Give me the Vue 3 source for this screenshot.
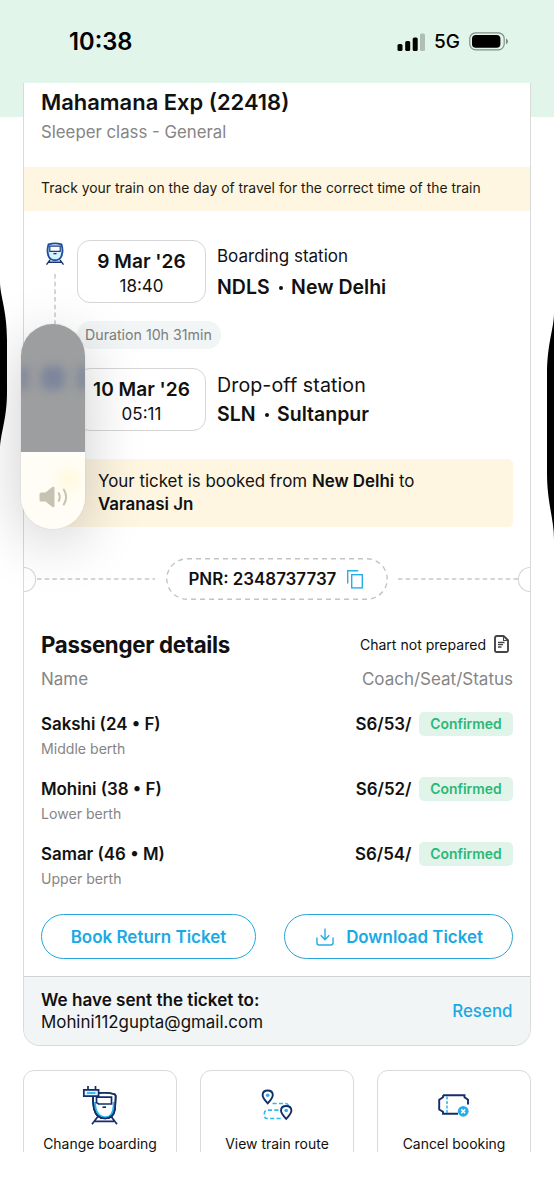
<script setup>
const passengers = [
  { name: 'Sakshi (24 • F)', berth: 'Middle berth', seat: 'S6/53/' },
  { name: 'Mohini (38 • F)', berth: 'Lower berth', seat: 'S6/52/' },
  { name: 'Samar (46 • M)', berth: 'Upper berth', seat: 'S6/54/' },
]
</script>

<template>
  <div class="screen">
    <header class="status">
      <span class="time">10:38</span>
      <div class="signals">
        <svg class="bars" width="29" height="18" viewBox="0 0 29 18">
          <rect x="0.5" y="11" width="5" height="7" rx="1.6" />
          <rect x="8.2" y="8" width="5" height="10" rx="1.6" />
          <rect x="15.7" y="4.5" width="5" height="13.5" rx="1.6" />
          <rect x="23" y="0.5" width="5" height="17.5" rx="1.6" opacity="0.22" />
        </svg>
        <span class="net">5G</span>
        <svg class="battery" width="39" height="19" viewBox="0 0 39 19">
          <rect x="0.8" y="0.8" width="34.4" height="17" rx="5.8" fill="none" stroke="#000" stroke-opacity="0.42" stroke-width="1.2" />
          <rect x="3" y="3" width="28.4" height="12.8" rx="3.8" />
          <path d="M37 6.4v5.8c1.2-.5 1.9-1.6 1.9-2.9S38.200 6.900 37 6.400z" opacity="0.45" />
        </svg>
      </div>
    </header>

    <main class="card">
      <section class="head">
        <h1>Mahamana Exp (22418)</h1>
        <p>Sleeper class - General</p>
      </section>

      <div class="notice"><span>Track your train on the day of travel for the correct time of the train</span></div>

      <section class="journey">
        <div class="rail">
          <svg width="20" height="24" viewBox="0 0 20 24" fill="none">
            <path d="M3.500 2.500Q10 .200 16.500 2.500Q18.600 9 16.300 14.500Q14.800 18.200 10 18.200T3.700 14.500Q1.400 9 3.500 2.500z" fill="#d5f1fc" stroke="#1d51a0" stroke-width="1.900" />
            <path d="M4.800 4.200h10.400v5.200H4.800z" fill="#fff" stroke="#233a7e" stroke-width="1.200" />
            <path d="M8.500 11.700h3" stroke="#102a6b" stroke-width="1.200" />
            <path d="M5 18L1.500 22.600M15 18l3.500 4.600M3.600 20.300h12.800" stroke="#17366e" stroke-width="1.400" />
          </svg>
          <svg class="track-line" width="2" height="100"><path d="M1 0V100" /></svg>
        </div>
        <div class="stops">
          <div class="stop">
            <div class="when"><b>9 Mar '26</b><span>18:40</span></div>
            <div class="where"><span class="kind boarding">Boarding station</span><b class="ndls">NDLS<em></em>New Delhi</b></div>
          </div>
          <div class="duration"><span>Duration 10h 31min</span></div>
          <div class="stop">
            <div class="when"><b>10 Mar '26</b><span>05:11</span></div>
            <div class="where"><span class="kind drop">Drop-off station</span><b class="sln">SLN<em></em>Sultanpur</b></div>
          </div>
        </div>
      </section>

      <div class="booked">
        <p>Your ticket is booked from <b>New Delhi</b> to<br /><b>Varanasi Jn</b></p>
      </div>

      <section class="pnr-row">
        <i class="notch left"></i>
        <svg class="dash" height="2" width="118"><path d="M0 1H118" /></svg>
        <div class="pnr">
          <svg class="outline" width="222" height="42"><rect x="0.800" y="0.800" width="220.400" height="40.400" rx="20.200" /></svg>
          <b>PNR: 2348737737</b>
          <svg width="18" height="20" viewBox="0 0 18 20" fill="none" stroke="#27aee4" stroke-width="1.400">
            <path d="M1.700 14.500V1.700h10.500" />
            <rect x="5.700" y="5.700" width="10.600" height="13.200" />
          </svg>
        </div>
        <svg class="dash" height="2" width="120"><path d="M0 1H120" /></svg>
        <i class="notch right"></i>
      </section>

      <section class="passengers">
        <div class="line title">
          <h2>Passenger details</h2>
          <div class="chart">
            <span>Chart not prepared</span>
            <svg width="15" height="18" viewBox="0 0 15 18" fill="none" stroke="#454545" stroke-linejoin="round">
              <path d="M3 1H9.600L14 5.300V15.500Q14 17 12.500 17H2.500Q1 17 1 15.500V3Q1 1 3 1z" stroke-width="1.900" />
              <path d="M9.500 1v4.500H14" stroke-width="1.100" />
              <path d="M4 7.500h6.500M4 9.700h5M4 12h3.500" stroke-width="1.300" />
            </svg>
          </div>
        </div>
        <div class="line labels"><span>Name</span><span>Coach/Seat/Status</span></div>
        <div v-for="p in passengers" :key="p.name" class="person">
          <div class="line who">
            <b>{{ p.name }}</b>
            <div class="seat"><b>{{ p.seat }}</b><span class="badge">Confirmed</span></div>
          </div>
          <p>{{ p.berth }}</p>
        </div>
      </section>

      <div class="actions">
        <button class="return"><span>Book Return Ticket</span></button>
        <button class="download">
          <svg width="18" height="18" viewBox="0 0 19 19" fill="none" stroke="#27aee4" stroke-width="1.500">
            <path d="M9.500 .500v11.500M5 7.700l4.500 4.600L14 7.700M1 10v5.300Q1 17.900 3.200 17.900h12.600q2.200 0 2.200-2.600V10" />
          </svg>
          <span>Download Ticket</span>
        </button>
      </div>

      <footer class="sent">
        <div><b>We have sent the ticket to:</b><span>Mohini112gupta@gmail.com</span></div>
        <a>Resend</a>
      </footer>
    </main>

    <nav class="tiles">
      <div class="tile">
        <div class="icon">
          <svg width="36" height="40" viewBox="0 0 36 40" fill="none" stroke="#142c69" stroke-width="1.700">
            <path d="M12 9Q22 6.500 32 9Q34 9.700 33.700 12L33 24Q31.500 33.500 23 33.500T12 24Q10.700 18 11 11z" fill="#fff" />
            <path d="M13 17Q13 31 22.500 32.200T31.800 17" stroke="#27b4ee" stroke-width="2" />
            <path d="M12 9Q22 6.500 32 9Q34 9.700 33.700 12L33 24Q31.500 33.500 23 33.500T12 24Q10.700 18 11 11z" />
            <path d="M14.500 12.200h15V19h-13l-2-1.500z" fill="#fff" />
            <path d="M20.500 22.200H24" />
            <path d="M15.500 32L10 39.300M29.500 32l5.500 7.300M13 36.300h19" />
            <path d="M6 1v5M13.500 1v5" />
            <path d="M1.800 4.900h14.800v6.300H1.800z" fill="#d7f3fd" />
            <path d="M5 8h8.500" stroke="#27b4ee" />
          </svg>
        </div>
        <span>Change boarding</span>
      </div>
      <div class="tile">
        <div class="icon">
          <svg width="32" height="32" viewBox="0 0 32 32" fill="none" stroke="#142c69" stroke-width="1.900">
            <path d="M11.500 14.500H23M24.200 14.500Q28 14.500 27 18.200M17.500 21.200H6Q3.300 21.200 3.300 25.500T6 29.500H21" stroke="#31b9ee" stroke-width="1.700" stroke-dasharray="4.200 2.200" />
            <path d="M6.700 14.300Q1.600 9 1.600 6Q1.800 1.500 6.700 1.500T11.800 6Q11.800 9 6.700 14.300z" fill="#fff" />
            <path d="M25.200 29.800Q20 24.500 20 21.500Q20.200 17 25.200 17T30.400 21.500Q30.400 24.500 25.200 29.800z" fill="#fff" />
            <circle cx="6.700" cy="6.200" r="1.800" fill="#31aee4" stroke="none" />
            <circle cx="25.200" cy="21.500" r="1.800" fill="#31aee4" stroke="none" />
          </svg>
        </div>
        <span>View train route</span>
      </div>
      <div class="tile">
        <div class="icon">
          <svg width="32" height="22" viewBox="0 0 32 22" fill="none" overflow="visible">
            <path d="M5 1.200H26.500V3.200L30 5.700V10.500M20 19.700H5V17.800L1.200 15.500V5.700L5 3.200V1.200" stroke="#142c69" stroke-width="1.900" />
            <path d="M9 2.500V19" stroke="#31b4ea" stroke-width="1.500" stroke-dasharray="3 1.500" />
            <circle cx="25.200" cy="17.300" r="5.400" fill="#27aee8" />
            <path d="M23.300 15.400l3.800 3.800M27.100 15.400l-3.800 3.800" stroke="#fff" stroke-width="1.500" />
          </svg>
        </div>
        <span>Cancel booking</span>
      </div>
    </nav>

    <div class="volume">
      <div class="track">
        <div class="empty"><i></i><i></i><i></i></div>
        <div class="level">
          <svg width="30" height="22" viewBox="0 0 30 22" fill="none" stroke="#c6c3b2" stroke-width="2" stroke-linecap="round">
            <path d="M2 6.500H6.500L13 1.200Q15.500 0 15.500 2V20Q15.500 22 13 20.800L6.500 15.500H2Q.5 15.500.5 14V8Q.5 6.500 2 6.500z" fill="#c6c3b2" stroke="none" />
            <path d="M19.800 7.200Q21.700 11 19.800 14.800M24.800 3.500Q29.500 11 24.800 18.500" />
          </svg>
        </div>
      </div>
    </div>

    <!-- side bulges of the screen edge while the volume key is held -->
    <svg class="edge edge-left" width="8" height="168" viewBox="0 0 8 168"><path d="M0 0C0 14 7 28 7 58V110C7 138 0 152 0 168z" /></svg>
    <svg class="edge edge-right" width="8" height="226" viewBox="0 0 8 226"><path d="M8 0C8 16 1 30 1 62V160C1 190 8 206 8 226z" /></svg>
  </div>
</template>

<style>
html, body { background: #fff; }
</style>

<style scoped>
* { box-sizing: border-box; margin: 0; padding: 0; }
.screen {
  position: relative; width: 554px; height: 1200px; overflow: hidden;
  background: linear-gradient(#e1f5ea 0 117px, #fff 117px);
  font-family: Inter, "Liberation Sans", sans-serif; color: #111; white-space: nowrap;
}
svg { display: block; flex: none; }
b, h1, h2 { font-weight: 600; }

.status { height: 83px; display: flex; justify-content: space-between; align-items: flex-start; padding: 28px 46px 0 69px; color: #000; }
.time { font-size: 23.700px; line-height: 28px; font-weight: 600; }
.signals { display: flex; align-items: center; height: 27px; }
.net { font-size: 19px; font-weight: 450; margin: 0 9px 0 8px; }

.card { margin: 0 23px; height: 963px; border: 1px solid #d9dadb; border-width: 0 1px 1px; border-radius: 0 0 17px 17px; background: #fff; overflow: hidden; }
.head { height: 84px; padding: 6px 17px 0; }
.head h1 { font-size: 21.950px; line-height: 26px; }
.head p { font-size: 16.800px; line-height: 22px; margin-top: 6px; color: #858585; }
.notice { height: 44px; padding: 0 17px; line-height: 43px; background: #fef6e0; font-size: 13.920px; color: #1c1a12; }

.journey { display: flex; padding-top: 29px; height: 248px; }
.rail { width: 53px; padding: 2px 0 0 9px; display: flex; flex-direction: column; align-items: center; }
.track-line { margin-top: 8px; }
.track-line path { stroke: #c4c4c4; stroke-width: 1.400; stroke-dasharray: 4.500 3.200; }
.stop { display: flex; }
.when { width: 129px; height: 63px; border: 1px solid #d6d6d6; border-radius: 13px; display: flex; flex-direction: column; align-items: center; padding-top: 8px; }
.when b { font-size: 19.100px; line-height: 25px; }
.when span { font-size: 17px; line-height: 24px; }
.where { margin-left: 11px; display: flex; flex-direction: column; }
.kind { line-height: 26px; margin-top: 3px; }
.boarding { font-size: 17px; }
.drop { font-size: 19.600px; letter-spacing: 0.100px; margin-top: 4px; }
.where b { font-size: 19.500px; line-height: 26px; display: flex; align-items: center; }
.ndls { margin-top: 5px; }
.sln { margin-top: 3px; }
.where em { width: 4px; height: 4px; border-radius: 2px; background: #111; margin: 1px 8.500px 0 9px; }
.duration { margin: 18px 0 19px; width: 144px; height: 28px; border-radius: 14px; background: #f1f5f5; color: #7b7e7e; font-size: 14.200px; line-height: 28px; padding-left: 8px; }

.booked { margin: 0 17px; height: 68px; border-radius: 5px; background: #fef6e0; padding: 11px 0 0 57px; font-size: 16.900px; line-height: 23px; }

.pnr-row { height: 42px; margin-top: 31px; display: flex; align-items: center; }
.notch { width: 12px; height: 25px; border: 1px solid #d4d4d4; }
.notch.left { border-left: 0; border-radius: 0 13px 13px 0; margin-right: 1px; }
.notch.right { border-right: 0; border-radius: 13px 0 0 13px; margin-left: auto; }
.dash path { stroke: #c8c8c8; stroke-width: 1.500; stroke-dasharray: 4.500 3.200; }
.pnr { position: relative; width: 222px; height: 42px; margin: 0 11px; display: flex; align-items: center; padding-left: 22.500px; gap: 9.500px; font-size: 16.900px; }
.outline { position: absolute; inset: 0; }
.outline rect { fill: none; stroke: #c4c4c4; stroke-width: 1.400; stroke-dasharray: 5 4; }

.passengers { padding: 30px 17px 0; height: 314px; }
.line { display: flex; justify-content: space-between; align-items: center; }
.title { height: 28px; }
h2 { font-size: 22.300px; font-weight: 700; letter-spacing: -0.300px; }
.chart { display: flex; align-items: center; gap: 8px; font-size: 14.050px; padding: 0 4px 0 0; }
.labels { height: 24px; margin-top: 9px; font-size: 17px; color: #858585; }
.person { height: 65px; }
.labels + .person { margin-top: 21px; }
.who { height: 24px; font-size: 16.900px; }
.seat { display: flex; align-items: center; gap: 7.500px; }
.badge { width: 94px; height: 24px; border-radius: 5px; background: #e1f4ea; color: #2ab877; font-size: 13.900px; font-weight: 600; line-height: 24px; text-align: center; }
.person p { font-size: 14.100px; line-height: 20px; margin-top: 3px; color: #858585; }

.actions { display: flex; justify-content: space-between; padding: 0 17px; }
button { height: 45px; border: 1px solid #27a6dc; border-radius: 23px; background: #fff; color: #1ba9e4; font-family: inherit; font-size: 17px; font-weight: 600; display: flex; align-items: center; justify-content: center; }
.return { width: 215px; }
.download { width: 229px; gap: 12px; padding-left: 2px; font-size: 16.900px; }

.sent { margin-top: 17px; height: 70px; border-top: 1px solid #cdd3d6; background: #f1f5f6; display: flex; justify-content: space-between; align-items: center; padding: 0 17.500px 2px 17px; font-size: 16.900px; line-height: 23px; }
.sent b, .sent span { display: block; }
.sent b { font-size: 17.100px; }
.sent a { color: #1ba9e4; font-weight: 500; padding-top: 2px; }

.tiles { margin: 24px 23px 0; height: 82px; overflow: hidden; display: flex; justify-content: space-between; }
.tile { width: 154px; height: 110px; border: 1px solid #d9d9d9; border-radius: 11px; display: flex; flex-direction: column; align-items: center; font-size: 13.950px; }
.icon { height: 40px; margin-top: 14px; display: flex; align-items: center; }
.tile span { margin-top: 10px; line-height: 18px; }

.edge { position: absolute; }
.edge-left { left: 0; top: 282px; }
.edge-right { right: 0; top: 313px; }
.volume { position: absolute; left: 21px; top: 324px; width: 64px; height: 205px; border-radius: 32px; box-shadow: 0 14px 60px rgba(0, 0, 0, 0.2), 0 0 2px rgba(0, 0, 0, 0.1); }
.track { height: 100%; border-radius: 32px; overflow: hidden; }
.empty { height: 128px; background: #9d9e9f; display: flex; align-items: flex-start; justify-content: space-between; padding-top: 42px; }
.empty i { width: 9px; height: 24px; border-radius: 8px; background: #74809b; opacity: 0.8; filter: blur(5px); margin: 0 -2px; }
.empty i:nth-child(2) { width: 24px; }
.level { height: 77px; border-top: 1px solid #fff; background: radial-gradient(circle at 48px 27px, #fff9dc 0, #fffdf3 16px, transparent 26px), #fffdf5; padding: 33px 0 0 18px; }
</style>
